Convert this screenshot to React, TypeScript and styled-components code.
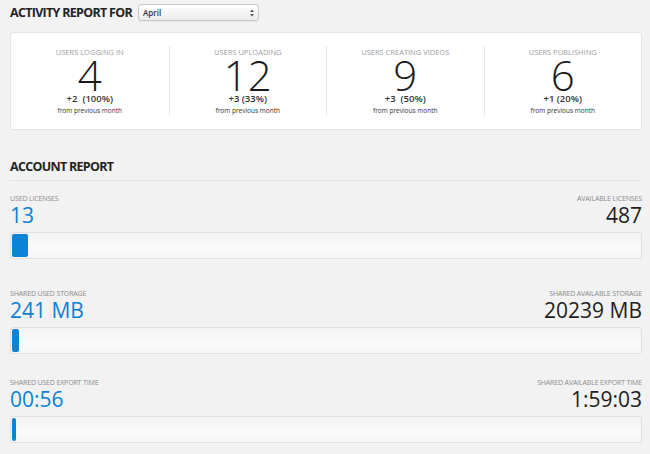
import React from "react";
import styled, { createGlobalStyle } from "styled-components";

const Global = createGlobalStyle`
  html, body { margin: 0; padding: 0; background: #f2f2f2; }
  body { font-family: "Open Sans", "Liberation Sans", sans-serif; color: #222; }
`;

const Page = styled.div`
  padding: 3px 8px 0 10px;
`;

const Header = styled.div`
  display: flex;
  align-items: center;
  gap: 6px;
  height: 18px;
`;

const Title = styled.h1`
  margin: 0;
  font-size: 12.5px;
  font-weight: 700;
  color: #222;
  line-height: 17px;
  letter-spacing: -0.7px;
`;

const SelectBox = styled.div`
  position: relative;
  width: 121px;
  height: 17px;
  box-sizing: border-box;
  border: 1px solid #c8c8c8;
  border-radius: 3px;
  background: linear-gradient(#ffffff, #ebebeb);
  font-size: 8px;
  font-weight: 600;
  color: #333;
  display: flex;
  align-items: center;
  padding-left: 4px;
  box-shadow: 0 1px 1px rgba(0, 0, 0, 0.06);
`;

const Arrows = styled.svg`
  position: absolute;
  right: 4px;
  top: 4px;
`;

const Card = styled.div`
  margin-top: 11px;
  background: #fff;
  border: 1px solid #e4e4e4;
  border-radius: 3px;
  padding: 13px 0;
  display: grid;
  grid-template-columns: repeat(4, 1fr);
`;

const Stat = styled.div<{ $first?: boolean }>`
  height: 70px;
  text-align: center;
  border-left: ${(p) => (p.$first ? "none" : "1px solid #e6e6e6")};
  display: flex;
  flex-direction: column;
  align-items: center;
`;

const StatLabel = styled.div`
  font-size: 7.5px;
  color: #9c9c9c;
  text-transform: uppercase;
  line-height: 10px;
  margin-top: 1px;
`;

const StatValue = styled.div`
  font-size: 42px;
  font-weight: 300;
  line-height: 36px;
  color: #1a1a1a;
`;

const StatDelta = styled.div`
  font-size: 9.5px;
  font-weight: 600;
  color: #333;
  line-height: 11px;
  white-space: pre;
`;

const StatNote = styled.div`
  font-size: 6.5px;
  color: #333;
  line-height: 10px;
  margin-top: 2px;
`;

const SectionTitle = styled.h2`
  margin: 29px 0 0;
  font-size: 12.5px;
  font-weight: 700;
  color: #222;
  line-height: 16px;
  padding-bottom: 5px;
  border-bottom: 1px solid #e6e6e6;
  letter-spacing: -0.7px;
`;

const Metric = styled.div<{ $gap: number }>`
  margin-top: ${(p) => p.$gap}px;
`;

const MetricHead = styled.div`
  display: flex;
  justify-content: space-between;
  align-items: flex-end;
`;

const MetricSide = styled.div<{ $right?: boolean }>`
  display: flex;
  flex-direction: column;
  align-items: ${(p) => (p.$right ? "flex-end" : "flex-start")};
`;

const MetricLabel = styled.div`
  font-size: 7px;
  color: #8a8a8a;
  text-transform: uppercase;
  line-height: 9px;
  letter-spacing: -0.15px;
`;

const MetricValue = styled.div<{ $accent?: boolean }>`
  font-size: 21px;
  font-weight: 400;
  line-height: 24px;
  color: ${(p) => (p.$accent ? "#0a82d2" : "#1e1e1e")};
`;

const Bar = styled.div`
  margin-top: 5px;
  height: 27px;
  box-sizing: border-box;
  border: 1px solid #e0e0e0;
  border-radius: 3px;
  background: linear-gradient(#f3f3f3, #fbfbfb 60%, #f6f6f6);
  padding: 1px;
  display: flex;
`;

const Fill = styled.div`
  height: 100%;
  background: #0a84d6;
  border-radius: 2px;
`;

const stats = [
  { label: "Users logging in", value: "4", delta: "+2  (100%)" },
  { label: "Users uploading", value: "12", delta: "+3 (33%)" },
  { label: "Users creating videos", value: "9", delta: "+3  (50%)" },
  { label: "Users publishing", value: "6", delta: "+1 (20%)" },
];

const metrics = [
  { used: "Used licenses", usedVal: "13", avail: "Available licenses", availVal: "487", fill: 16, gap: 13 },
  { used: "Shared used storage", usedVal: "241 MB", avail: "Shared available storage", availVal: "20239 MB", fill: 7, gap: 30 },
  { used: "Shared used export time", usedVal: "00:56", avail: "Shared available export time", availVal: "1:59:03", fill: 4, gap: 24 },
];

export default function App() {
  return (
    <>
      <Global />
      <Page>
        <Header>
          <Title>ACTIVITY REPORT FOR</Title>
          <SelectBox>
            April
            <Arrows width="4" height="8" viewBox="0 0 4 8">
              <path d="M0 3 L2 0.5 L4 3 Z M0 5 L2 7.5 L4 5 Z" fill="#555" />
            </Arrows>
          </SelectBox>
        </Header>
        <Card>
          {stats.map((s, i) => (
            <Stat key={s.label} $first={i === 0}>
              <StatLabel>{s.label}</StatLabel>
              <StatValue>{s.value}</StatValue>
              <StatDelta>{s.delta}</StatDelta>
              <StatNote>from previous month</StatNote>
            </Stat>
          ))}
        </Card>
        <SectionTitle>ACCOUNT REPORT</SectionTitle>
        {metrics.map((m) => (
          <Metric key={m.used} $gap={m.gap}>
            <MetricHead>
              <MetricSide>
                <MetricLabel>{m.used}</MetricLabel>
                <MetricValue $accent>{m.usedVal}</MetricValue>
              </MetricSide>
              <MetricSide $right>
                <MetricLabel>{m.avail}</MetricLabel>
                <MetricValue>{m.availVal}</MetricValue>
              </MetricSide>
            </MetricHead>
            <Bar>
              <Fill style={{ width: m.fill }} />
            </Bar>
          </Metric>
        ))}
      </Page>
    </>
  );
}
